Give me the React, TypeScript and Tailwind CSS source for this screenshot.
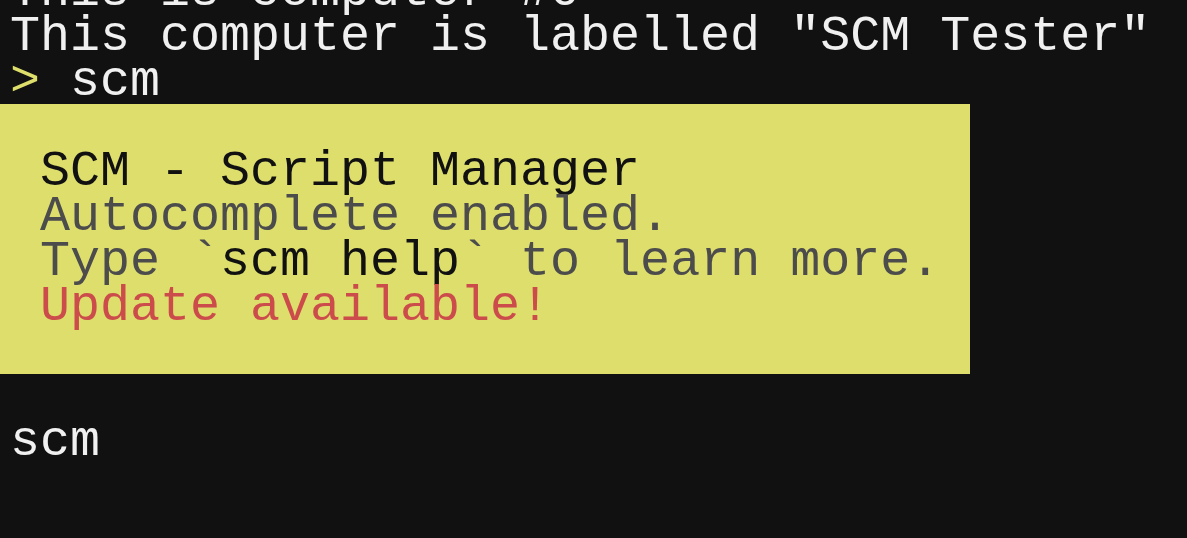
const FG = "text-[#f0f0f0]";

function Row({ children, className = "" }: { children?: React.ReactNode; className?: string }) {
  return <div className={`h-[45px] whitespace-pre pl-[10px] ${className}`}>{children}</div>;
}

export default function App() {
  return (
    <div
      className="w-[1187px] h-[538px] overflow-hidden bg-[#111111] text-[50px] leading-[45px]"
      style={{ fontFamily: '"Liberation Mono", "DejaVu Sans Mono", monospace' }}
    >
      <div className="-mt-[31px] flex flex-col">
        <Row className={FG}>This is computer #0</Row>
        <Row className={FG}>This computer is labelled "SCM Tester"</Row>
        <Row className={FG}>
          <span className="text-[#dede6c]">&gt;</span> scm
        </Row>

        {/* scm banner */}
        <div className="w-[970px] bg-[#dede6c] flex flex-col">
          <Row />
          <Row className="text-[#111111]"> SCM - Script Manager</Row>
          <Row className="text-[#4c4c4c]"> Autocomplete enabled.</Row>
          <Row className="text-[#4c4c4c]">
            {" Type `"}
            <span className="text-[#111111]">scm help</span>
            {"` to learn more."}
          </Row>
          <Row className="text-[#cc4c4c]"> Update available!</Row>
          <Row />
        </div>

        <Row />
        <Row className={FG}>scm</Row>
        <Row />
        <Row />
      </div>
    </div>
  );
}
